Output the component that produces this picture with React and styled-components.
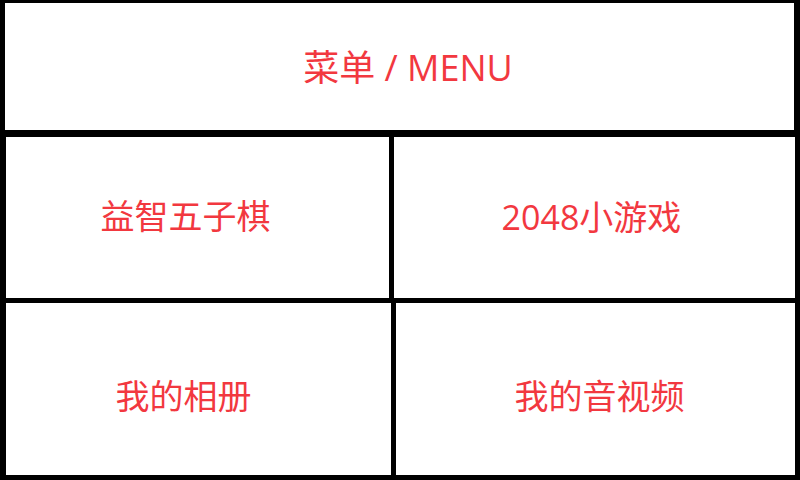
import React from "react";
import styled, { createGlobalStyle } from "styled-components";

const GlobalStyle = createGlobalStyle`
  html, body {
    margin: 0;
    padding: 0;
    background: #fff;
  }
  body {
    font-family: "Open Sans", "Noto Sans CJK SC", sans-serif;
  }
`;

const Screen = styled.div`
  width: 800px;
  height: 480px;
  background: #000;
  display: flex;
  flex-direction: column;
  box-sizing: border-box;
  padding-bottom: 5px;
`;

const Header = styled.div`
  height: 127px;
  margin: 3px 6px 7px 5px;
  background: #fff;
  display: flex;
  align-items: center;
  justify-content: center;
  padding-left: 17px;
  padding-bottom: 3px;
  box-sizing: border-box;
  color: #f2383f;
  font-size: 36px;
`;

const Row = styled.div`
  display: flex;
  gap: 5px;
  height: ${(p) => p.$height}px;
  margin: 0 5px 0 6px;
  & + & {
    margin-top: 5px;
  }
`;

// shift the label off-centre by padding one side
const Cell = styled.div`
  background: #fff;
  display: flex;
  align-items: center;
  justify-content: center;
  box-sizing: border-box;
  flex: ${(p) => (p.$width ? "none" : "1")};
  width: ${(p) => (p.$width ? p.$width + "px" : "auto")};
  padding-left: ${(p) => Math.max(0, p.$dx * 2)}px;
  padding-right: ${(p) => Math.max(0, -p.$dx * 2)}px;
  padding-top: ${(p) => Math.max(0, p.$dy * 2)}px;
  padding-bottom: ${(p) => Math.max(0, -p.$dy * 2)}px;
  color: #f2383f;
  font-size: 34px;
  white-space: nowrap;
`;

const rows = [
  {
    height: 161,
    left: 383,
    items: [
      { text: "益智五子棋", dx: -12, dy: -3 },
      { text: "2048小游戏", dx: -3, dy: -2 },
    ],
  },
  {
    height: 172,
    left: 385,
    items: [
      { text: "我的相册", dx: -15, dy: 5 },
      { text: "我的音视频", dx: 4, dy: 5 },
    ],
  },
];

export default function App() {
  return (
    <>
      <GlobalStyle />
      <Screen>
        <Header>菜单 / MENU</Header>
        {rows.map((row, i) => (
          <Row key={i} $height={row.height}>
            {row.items.map((item, j) => (
              <Cell
                key={item.text}
                $width={j === 0 ? row.left : 0}
                $dx={item.dx}
                $dy={item.dy}
              >
                {item.text}
              </Cell>
            ))}
          </Row>
        ))}
      </Screen>
    </>
  );
}
